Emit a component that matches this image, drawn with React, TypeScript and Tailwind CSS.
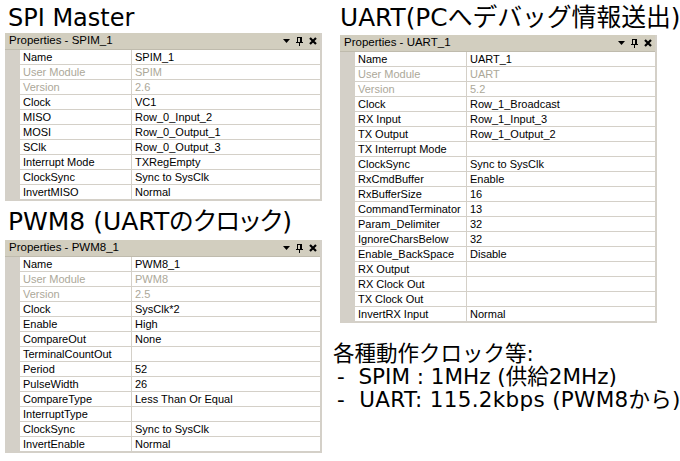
import React from 'react';

type Row = { label: string; value?: string; disabled?: boolean };

const spim: Row[] = [
  { label: 'Name', value: 'SPIM_1' },
  { label: 'User Module', value: 'SPIM', disabled: true },
  { label: 'Version', value: '2.6', disabled: true },
  { label: 'Clock', value: 'VC1' },
  { label: 'MISO', value: 'Row_0_Input_2' },
  { label: 'MOSI', value: 'Row_0_Output_1' },
  { label: 'SClk', value: 'Row_0_Output_3' },
  { label: 'Interrupt Mode', value: 'TXRegEmpty' },
  { label: 'ClockSync', value: 'Sync to SysClk' },
  { label: 'InvertMISO', value: 'Normal' },
];

const pwm: Row[] = [
  { label: 'Name', value: 'PWM8_1' },
  { label: 'User Module', value: 'PWM8', disabled: true },
  { label: 'Version', value: '2.5', disabled: true },
  { label: 'Clock', value: 'SysClk*2' },
  { label: 'Enable', value: 'High' },
  { label: 'CompareOut', value: 'None' },
  { label: 'TerminalCountOut' },
  { label: 'Period', value: '52' },
  { label: 'PulseWidth', value: '26' },
  { label: 'CompareType', value: 'Less Than Or Equal' },
  { label: 'InterruptType' },
  { label: 'ClockSync', value: 'Sync to SysClk' },
  { label: 'InvertEnable', value: 'Normal' },
];

const uart: Row[] = [
  { label: 'Name', value: 'UART_1' },
  { label: 'User Module', value: 'UART', disabled: true },
  { label: 'Version', value: '5.2', disabled: true },
  { label: 'Clock', value: 'Row_1_Broadcast' },
  { label: 'RX Input', value: 'Row_1_Input_3' },
  { label: 'TX Output', value: 'Row_1_Output_2' },
  { label: 'TX Interrupt Mode' },
  { label: 'ClockSync', value: 'Sync to SysClk' },
  { label: 'RxCmdBuffer', value: 'Enable' },
  { label: 'RxBufferSize', value: '16' },
  { label: 'CommandTerminator', value: '13' },
  { label: 'Param_Delimiter', value: '32' },
  { label: 'IgnoreCharsBelow', value: '32' },
  { label: 'Enable_BackSpace', value: 'Disable' },
  { label: 'RX Output' },
  { label: 'RX Clock Out' },
  { label: 'TX Clock Out' },
  { label: 'InvertRX Input', value: 'Normal' },
];

const HeaderIcons = () => (
  <div className="flex items-center gap-[6px] pr-[3px]">
    {/* dropdown */}
    <svg width="7" height="4" viewBox="0 0 7 4">
      <path d="M0 0h7L3.5 4z" fill="#000" />
    </svg>
    {/* pin */}
    <svg width="7" height="9" viewBox="0 0 7 9" shapeRendering="crispEdges">
      <path d="M1.5 0.5h4v4" fill="none" stroke="#000" />
      <rect x="4" y="0" width="2" height="5" fill="#000" />
      <rect x="0" y="5" width="7" height="1" fill="#000" />
      <rect x="3" y="6" width="1" height="3" fill="#000" />
      <rect x="1" y="0" width="1" height="5" fill="#000" />
    </svg>
    {/* close */}
    <svg width="8" height="8" viewBox="0 0 8 8">
      <path d="M1 1l6 6M7 1l-6 6" stroke="#000" strokeWidth="2.2" />
    </svg>
  </div>
);

const Panel = ({ title, rows }: { title: string; rows: Row[] }) => (
  <div className="w-[317px] shrink-0 border-r-2 border-b border-[#d4d0c8] font-['Liberation_Sans',sans-serif] text-[11px] leading-none text-black">
    <div className="h-[17px] bg-[#d2cebf] flex items-center justify-between pl-[4px] border-b border-[#bfbbad] text-[11.5px]">
      <span>Properties - {title}</span>
      <HeaderIcons />
    </div>
    <div className="flex">
      <div className="w-[15px] bg-[#d4d0c8] shrink-0" />
      <div className="flex-1 flex flex-col">
        {rows.map((r, i) => (
          <div key={i} className="h-[15px] flex border-b border-[#d4d0c8]">
            <div
              className={`w-[112px] shrink-0 border-r border-[#d4d0c8] pl-[3px] flex items-center whitespace-nowrap ${r.disabled ? 'text-[#aca899]' : ''}`}
            >
              {r.label}
            </div>
            <div className={`flex-1 pl-[3px] flex items-center whitespace-nowrap ${r.disabled ? 'text-[#aca899]' : ''}`}>
              {r.value ?? ''}
            </div>
          </div>
        ))}
      </div>
    </div>
  </div>
);

const App: React.FC = () => {
  return (
    <div className="w-[680px] h-[461px] bg-white flex overflow-hidden text-black">
      {/* left column */}
      <div className="w-[330px] shrink-0 pl-[5px] flex flex-col">
        <h1 className="pt-[4px] pl-[3px] h-[33px] text-[24px] leading-[28px] font-['DejaVu_Sans','Noto_Sans_CJK_JP',sans-serif] font-normal whitespace-nowrap">
          SPI Master
        </h1>
        <Panel title="SPIM_1" rows={spim} />
        <h2 className="pl-[3px] pt-[6px] h-[39px] text-[25px] leading-[30px] font-['DejaVu_Sans','Noto_Sans_CJK_JP',sans-serif] [font-feature-settings:'palt'] whitespace-nowrap">
          PWM8 (UARTのクロック)
        </h2>
        <Panel title="PWM8_1" rows={pwm} />
      </div>

      {/* right column */}
      <div className="flex-1 min-w-0 pl-[10px] flex flex-col">
        <h1 className="pt-[3px] h-[35px] text-[24.8px] leading-[29px] font-['DejaVu_Sans','Noto_Sans_CJK_JP',sans-serif] whitespace-nowrap">
          UART(PCへデバッグ情報送出)
        </h1>
        <Panel title="UART_1" rows={uart} />
        <div className="mt-[19px] -ml-[7px] text-[21.5px] leading-[23px] font-['DejaVu_Sans','Noto_Sans_CJK_JP',sans-serif] whitespace-nowrap">
          <div>各種動作クロック等:</div>
          <div className="pl-[4px]">-&nbsp;&nbsp;SPIM : 1MHz (供給2MHz)</div>
          <div className="pl-[4px] tracking-[0.3px]">-&nbsp;&nbsp;UART: 115.2kbps (PWM8から)</div>
        </div>
      </div>
    </div>
  );
};

export default App;
